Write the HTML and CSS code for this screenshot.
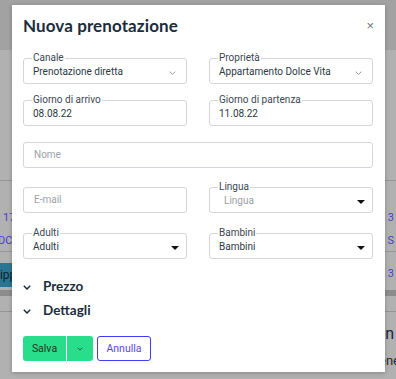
FILE: index.html
```html
<!DOCTYPE html>
<html lang="it">
<head>
    <meta charset="UTF-8">
    <meta name="viewport" content="width=device-width, initial-scale=1.0">
    <title>Nuova prenotazione</title>
<link rel="stylesheet" href="styles.css">
</head>
<body>
    <!-- pagina sotto il modale (già oscurata) -->
    <div class="page">
        <div class="page-header"></div>
        <div class="page-body">
            <div class="bg-row bg-sep"></div>
            <div class="bg-row bg-num">
                <span class="bg-left">17</span><span class="bg-right">3</span>
            </div>
            <div class="bg-row bg-name">
                <span class="bg-left">DC</span><span class="bg-right">S</span>
            </div>
            <div class="bg-row bg-event">
                <span class="bg-bar">lipp</span><span class="bg-right">3</span>
            </div>
            <div class="bg-scroll"></div>
            <div class="bg-row bg-big">
                <span class="bg-left"></span><span class="bg-right">n</span>
            </div>
            <div class="bg-row bg-small">
                <span class="bg-left"></span><span class="bg-right">ene</span>
            </div>
        </div>
    </div>

    <div class="modal">
        <div class="modal-head">
            <h1>Nuova prenotazione</h1>
            <button class="close" type="button">&times;</button>
        </div>

        <div class="row first">
            <fieldset class="field">
                <legend>Canale</legend>
                <div class="value">Prenotazione diretta</div>
                <span class="chev">
                    <svg width="7" height="4" viewBox="0 0 7 4"><path d="M.7 .7l2.8 2.6L6.3 .7" fill="none" stroke="#8a9096" stroke-width="0.9"/></svg>
                </span>
            </fieldset>
            <fieldset class="field">
                <legend>Proprietà</legend>
                <div class="value">Appartamento Dolce Vita</div>
                <span class="chev">
                    <svg width="7" height="4" viewBox="0 0 7 4"><path d="M.7 .7l2.8 2.6L6.3 .7" fill="none" stroke="#8a9096" stroke-width="0.9"/></svg>
                </span>
            </fieldset>
        </div>

        <div class="row dates">
            <fieldset class="field">
                <legend>Giorno di arrivo</legend>
                <div class="value">08.08.22</div>
            </fieldset>
            <fieldset class="field">
                <legend>Giorno di partenza</legend>
                <div class="value">11.08.22</div>
            </fieldset>
        </div>

        <div class="row name">
            <div class="input">Nome</div>
        </div>

        <div class="row contact">
            <div class="input">E-mail</div>
            <fieldset class="field">
                <legend>Lingua</legend>
                <div class="value muted">Lingua</div>
                <span class="caret"></span>
            </fieldset>
        </div>

        <div class="row guests">
            <fieldset class="field">
                <legend>Adulti</legend>
                <div class="value">Adulti</div>
                <span class="caret"></span>
            </fieldset>
            <fieldset class="field">
                <legend>Bambini</legend>
                <div class="value">Bambini</div>
                <span class="caret"></span>
            </fieldset>
        </div>

        <div class="section first">
            <svg width="8" height="5" viewBox="0 0 8 5"><path d="M.8 .8L4 4l3.2-3.2" fill="none" stroke="#1d2f3f" stroke-width="1.5"/></svg>
            <span>Prezzo</span>
        </div>
        <div class="section">
            <svg width="8" height="5" viewBox="0 0 8 5"><path d="M.8 .8L4 4l3.2-3.2" fill="none" stroke="#1d2f3f" stroke-width="1.5"/></svg>
            <span>Dettagli</span>
        </div>

        <div class="actions">
            <div class="split">
                <button class="btn-save" type="button">Salva</button>
                <button class="btn-more" type="button">
                    <svg width="6" height="4" viewBox="0 0 6 4"><path d="M.7 .8L3 3l2.3-2.2" fill="none" stroke="#1f5a3c" stroke-width="0.9"/></svg>
                </button>
            </div>
            <button class="btn-cancel" type="button">Annulla</button>
        </div>
    </div>
</body>
</html>
```

FILE: styles.css
```css
body {
    margin: 0;
    font-family: 'Roboto', 'Lato', sans-serif;
    background-color: #b1b1b1; /* pagina oscurata dall'overlay */
    width: 396px;
    height: 379px;
    overflow: hidden;
    position: relative;
}

/* ---- pagina di sfondo ---- */
.page-header {
    height: 50px;
    background-color: #a2a2a2;
}
.page-body {
    padding-top: 130px;
}
.bg-row {
    display: flex;
    justify-content: space-between;
    align-items: center;
    font-size: 11px;
    color: #4a40c6;
}
.bg-left {
    padding-left: 3px;
}
.bg-right {
    padding-right: 2px;
}
.bg-sep {
    height: 24px;
    border-top: 1px solid #959595;
}
.bg-num {
    height: 24px;
}
.bg-name {
    height: 22px;
    border-bottom: 1px solid #979797;
}
.bg-name .bg-left {
    padding-left: 0;
    margin-left: -2px;
}
.bg-event {
    height: 38px;
    align-items: flex-start;
}
.bg-bar {
    background-color: #2b7594;
    color: #0d1f2a;
    font-size: 12px;
    height: 24px;
    line-height: 24px;
    width: 30px;
    margin-left: -3px;
    margin-top: 11px;
}
.bg-event .bg-right {
    margin-top: 15px;
}
.bg-scroll {
    height: 6px;
    background-color: #8c8c8c;
    margin-bottom: 15px;
}
.bg-big {
    height: 34px;
    font-size: 16px;
    color: #14283a;
    border-top: 1px solid #959595;
    padding-top: 10px;
    box-sizing: border-box;
}
.bg-small {
    height: 30px;
    font-size: 13px;
    color: #2a2a2a;
}
.bg-small .bg-right {
    padding-right: 0;
    margin-right: -4px;
}

/* ---- modale ---- */
.modal {
    position: absolute;
    left: 12px;
    top: 5px;
    width: 373px;
    height: 367px;
    box-sizing: border-box;
    background-color: #ffffff;
    box-shadow: 0 1px 4px rgba(0, 0, 0, 0.25);
    padding: 0 12px 0 11px;
}
.modal-head {
    display: flex;
    justify-content: space-between;
    align-items: center;
    height: 40px;
}
h1 {
    margin: 0;
    font-family: 'Lato', sans-serif;
    font-size: 17px;
    font-weight: 700;
    color: #1b2d3c;
    letter-spacing: 0.1px;
}
.close {
    border: none;
    background: none;
    padding: 0;
    font-size: 13px;
    color: #6f7780;
    margin-right: -1px;
    cursor: pointer;
}

.row {
    display: flex;
    gap: 22px;
    align-items: flex-end;
}
.row.first {
    margin-top: 9px;
}
.row.dates {
    margin-top: 12px;
}
.row.name {
    margin-top: 16px;
}
.row.contact {
    margin-top: 15px;
}
.row.guests {
    margin-top: 16px;
}
.row.name .input {
    flex: 1;
}

.field {
    position: relative;
    margin: 0;
    width: 164px;
    height: 30px;
    box-sizing: border-box;
    border: 1px solid #d3d7db;
    border-radius: 3px;
    padding: 0 0 0 9px;
    font-size: 10px;
    color: #2b3944;
}
.field legend {
    padding: 0 1px;
    margin-left: -1px;
    line-height: 8px;
    font-size: 10px;
    color: #3a4853;
}
.value {
    line-height: 12px;
    margin-top: 4px;
}
.value.muted {
    color: #9aa0a6;
    padding-left: 5px;
}
.chev {
    position: absolute;
    right: 10px;
    top: 9px;
    line-height: 0;
}
.caret {
    position: absolute;
    right: 7px;
    top: 9px;
    border-left: 4px solid transparent;
    border-right: 4px solid transparent;
    border-top: 4px solid #111111;
}
.input {
    width: 164px;
    height: 26px;
    box-sizing: border-box;
    border: 1px solid #d3d7db;
    border-radius: 3px;
    padding-left: 10px;
    line-height: 24px;
    font-size: 10px;
    color: #9ba2a9;
}

.section {
    display: flex;
    align-items: center;
    gap: 12px;
    height: 24px;
    font-family: 'Lato', sans-serif;
    font-size: 13.5px;
    font-weight: 700;
    color: #1b2d3c;
}
.section.first {
    margin-top: 15px;
}
.section svg {
    margin-top: 2px;
}

.actions {
    display: flex;
    gap: 4px;
    margin-top: 14px;
}
.split {
    display: flex;
    gap: 1px;
}
.split button {
    height: 25px;
    border: none;
    background-color: #28de8a;
    color: #163826;
    font-family: 'Roboto', sans-serif;
    font-size: 10.5px;
    cursor: pointer;
    line-height: 0;
}
.btn-save {
    width: 43px;
    border-radius: 3px 0 0 3px;
}
.btn-more {
    width: 26px;
    border-radius: 0 3px 3px 0;
}
.btn-cancel {
    height: 25px;
    width: 54px;
    box-sizing: border-box;
    border: 1px solid #3e3ef2;
    border-radius: 3px;
    background-color: #ffffff;
    color: #5a46ee;
    font-family: 'Roboto', sans-serif;
    font-size: 10.5px;
    cursor: pointer;
}
```
